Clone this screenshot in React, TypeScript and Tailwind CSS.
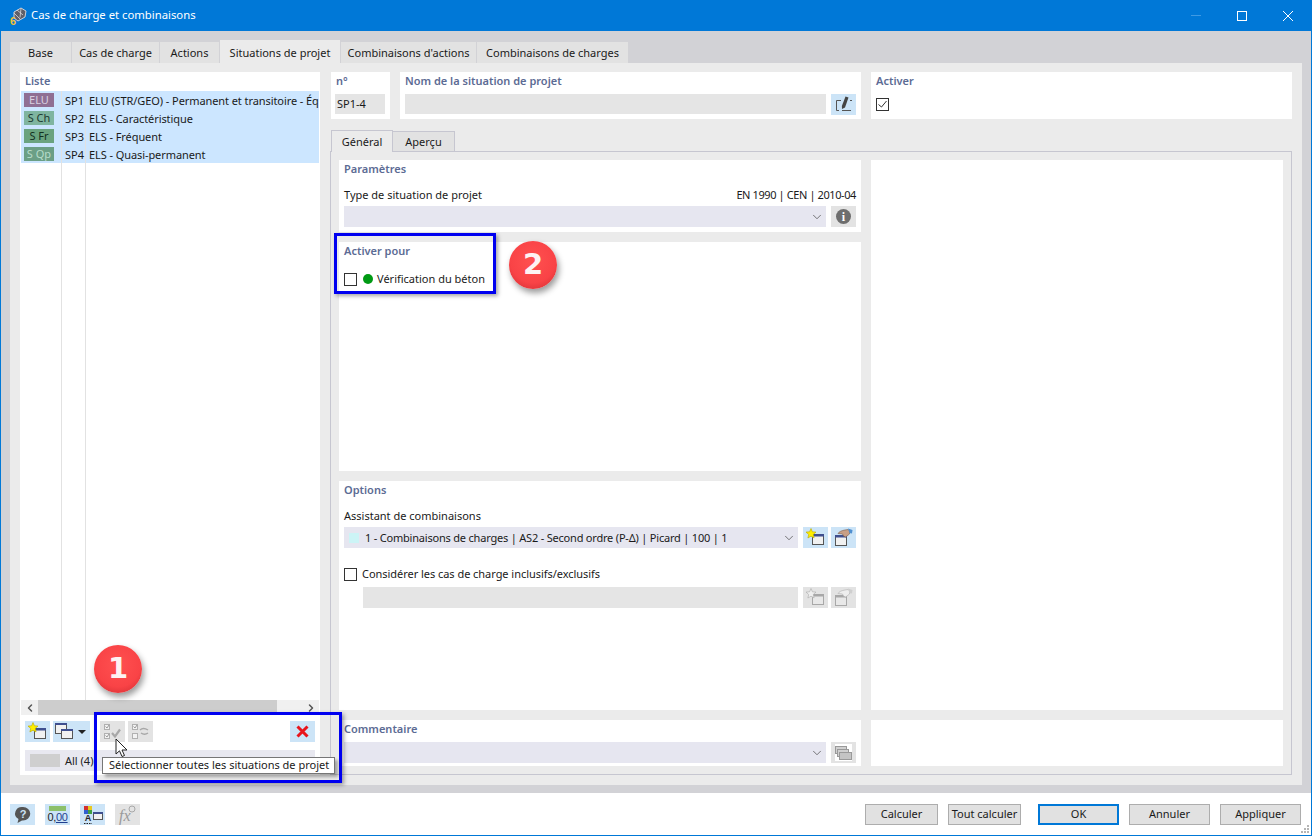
import type { ReactNode } from "react";
import { ChevronDown, ChevronLeft, ChevronRight } from "lucide-react";

const rows = [
  { tag: "ELU", tagCls: "bg-[#8f6f93] text-[#d9cfe0]", id: "SP1", name: "ELU (STR/GEO) - Permanent et transitoire - Éq" },
  { tag: "S Ch", tagCls: "bg-[#7fb5a0] text-[#1d3a30]", id: "SP2", name: "ELS - Caractéristique" },
  { tag: "S Fr", tagCls: "bg-[#6aa37f] text-[#12301f]", id: "SP3", name: "ELS - Fréquent" },
  { tag: "S Qp", tagCls: "bg-[#6b9f86] text-[#b7dccb]", id: "SP4", name: "ELS - Quasi-permanent" },
];

const mainTabs = [
  { label: "Base", w: "w-[61px]" },
  { label: "Cas de charge", w: "w-[87px]" },
  { label: "Actions", w: "w-[59px]" },
  { label: "Situations de projet", w: "w-[120px]", active: true },
  { label: "Combinaisons d'actions", w: "w-[135px]" },
  { label: "Combinaisons de charges", w: "w-[151px]" },
];

function WindowGlyph({ muted }: { muted?: boolean }) {
  const dark = muted ? "#a8a8a8" : "#555";
  const head = muted ? "#a8a8a8" : "#3f4f8f";
  return (
    <>
      <rect x="8.5" y="6.5" width="11" height="10" fill={muted ? "#e8e8e8" : "#f1f1f1"} stroke={dark} />
      <rect x="8" y="6" width="12" height="2.5" fill={head} />
    </>
  );
}

function NewIcon({ muted }: { muted?: boolean }) {
  return (
    <svg width="25" height="21" viewBox="0 0 25 21">
      <g transform="translate(1 1)">
        <WindowGlyph muted={muted} />
        <path
          d="M7 .5l1.400 3.300 3.600.3-2.700 2.300.8 3.500L7 8.200 3.900 10l.8-3.500L2 4.100l3.600-.3z"
          fill={muted ? "#efefef" : "#ffee00"}
          stroke={muted ? "#aaa" : "#b8a900"}
          strokeWidth=".6"
        />
      </g>
    </svg>
  );
}

function HandIcon({ muted }: { muted?: boolean }) {
  return (
    <svg width="25" height="21" viewBox="0 0 25 21">
      <g transform="translate(-4 2)">
        <WindowGlyph muted={muted} />
      </g>
      <path
        d="M7 6.500c1-2 4-3 7-3.500l3-.5 2 1.500-.5 3-2.500 2-1.500 1-2-1-1-2z"
        fill={muted ? "#eeeeee" : "#c89f86"}
        stroke={muted ? "#b0b0b0" : "#7a5a48"}
        strokeWidth=".6"
      />
      <path d="M17 1.500l4.500 1.500-.5 3.500-2.500-.5z" fill={muted ? "#cfcfcf" : "#4f8fd0"} />
    </svg>
  );
}

function EditIcon() {
  return (
    <svg width="25" height="21" viewBox="0 0 25 21" fill="none">
      <path d="M10 6.500H5.500v10H8M11 16.500h9" stroke="#555" />
      <path d="M14.500 2.500l3 1-3.500 10-3 1.500-.1-3z" fill="#444" />
      <path d="M19 6.500h2" stroke="#555" />
    </svg>
  );
}

function CopyIcon() {
  return (
    <svg width="25" height="21" viewBox="0 0 25 21" className="shrink-0">
      <rect x="2.500" y="2.500" width="11" height="10" fill="#f1f1f1" stroke="#555" />
      <rect x="2" y="2" width="12" height="2" fill="#3f4f8f" />
      <rect x="8.500" y="8.500" width="11" height="9" fill="#f1f1f1" stroke="#555" />
      <rect x="8" y="8" width="12" height="2" fill="#3f4f8f" />
    </svg>
  );
}

function CheckAllIcon() {
  return (
    <svg width="25" height="21" viewBox="0 0 25 21" fill="none">
      <rect x="4.500" y="3.500" width="5" height="5" stroke="#b0b0b0" fill="#f2f2f2" />
      <rect x="4.500" y="12.500" width="5" height="5" stroke="#b0b0b0" fill="#f2f2f2" />
      <path d="M5.500 5.500l1.500 1.500 2-3M5.500 14.500l1.500 1.500 2-3" stroke="#9a9a9a" />
      <path d="M12 12l3 3.500 5-7" stroke="#a8a8a8" strokeWidth="2.200" />
    </svg>
  );
}

function SwapIcon() {
  return (
    <svg width="25" height="21" viewBox="0 0 25 21" fill="none">
      <rect x="4.500" y="3.500" width="5" height="5" stroke="#b0b0b0" fill="#f2f2f2" />
      <rect x="4.500" y="12.500" width="5" height="5" stroke="#b0b0b0" fill="#f2f2f2" />
      <path d="M5.500 5.500l1.500 1.500 2-3" stroke="#9a9a9a" />
      <path d="M12 9c2-2 5-2 8 0M20 12c-2 1.500-5 1.500-7 0" stroke="#a8a8a8" strokeWidth="1.500" />
    </svg>
  );
}

function HelpIcon() {
  return (
    <svg width="25" height="21" viewBox="0 0 25 21">
      <path d="M13 3a7 6.500 0 0 1 0 13.500h-1L7.500 19l1-4A7 6.500 0 0 1 13 3z" fill="#555" />
      <text x="13" y="14" textAnchor="middle" fontSize="11" fontWeight="700" fill="#cde4f7" fontFamily="Liberation Sans, sans-serif">?</text>
    </svg>
  );
}

function UnitsIcon() {
  return (
    <div className="flex h-full w-full flex-col items-center pt-[2px]">
      <div className="h-[5px] w-[17px] bg-[#8cc06a]" />
      <span className="text-[11px] leading-[13px] tracking-[-0.3px] text-[#222] font-['Liberation_Sans',sans-serif]">
        0,<span className="text-[#1f3f8f] underline">00</span>
      </span>
    </div>
  );
}

function ColorIcon() {
  return (
    <svg width="25" height="21" viewBox="0 0 25 21">
      <rect x="4" y="2" width="4" height="4" fill="#d23030" />
      <rect x="8" y="2" width="4" height="4" fill="#e8c820" />
      <rect x="4" y="6" width="4" height="4" fill="#3060d0" />
      <rect x="8" y="6" width="4" height="4" fill="#40a040" />
      <text x="8" y="17" textAnchor="middle" fontSize="9" fontWeight="700" fill="#222" fontFamily="Liberation Sans, sans-serif">A</text>
      <path d="M4 19.500h8" stroke="#222" strokeDasharray="1.500 1" />
      <rect x="13.500" y="8.500" width="9" height="7" fill="#f1f1f1" stroke="#555" />
      <rect x="13" y="8" width="10" height="2" fill="#3f4f8f" />
    </svg>
  );
}

function FormulaIcon() {
  return (
    <svg width="25" height="21" viewBox="0 0 25 21">
      <text x="4" y="17" fontSize="16" fontStyle="italic" fill="#9a9a9a" fontFamily="Liberation Serif, serif">fx</text>
      <circle cx="17" cy="5" r="3" fill="none" stroke="#a8a8a8" />
    </svg>
  );
}

function StackIcon() {
  return (
    <svg width="25" height="21" viewBox="0 0 25 21">
      <rect x="4" y="2" width="17" height="17" fill="#ffffff" />
      <rect x="4.500" y="4.500" width="11" height="7" fill="#d0d0d0" stroke="#999" />
      <rect x="6.500" y="7.500" width="11" height="7" fill="#d0d0d0" stroke="#999" />
      <rect x="8.500" y="10.500" width="12" height="7" fill="#c4c4c4" stroke="#999" />
    </svg>
  );
}

function IconBtn({ children, muted, className = "" }: { children: ReactNode; muted?: boolean; className?: string }) {
  return (
    <div className={`flex h-[21px] w-[25px] shrink-0 items-center justify-center ${muted ? "bg-[#e3e3e3]" : "bg-[#cce4f7]"} ${className}`}>
      {children}
    </div>
  );
}

function Box({ checked }: { checked?: boolean }) {
  return (
    <div className="flex h-[13px] w-[13px] shrink-0 items-center justify-center border border-[#333] bg-white">
      {checked && (
        <svg width="11" height="11" viewBox="0 0 11 11" fill="none">
          <path d="M1.500 5.500l3 2.500 5-6" stroke="#333" />
        </svg>
      )}
    </div>
  );
}

function CardLabel({ children }: { children: ReactNode }) {
  return <div className="h-[18px] text-[11px] font-semibold leading-[18px] text-[#5c6b94]">{children}</div>;
}

function Select({ children, className = "" }: { children?: ReactNode; className?: string }) {
  return (
    <div className={`flex h-[21px] items-center bg-[#e6e6f0] pr-[2px] ${className}`}>
      <div className="flex min-w-0 flex-1 items-center">{children}</div>
      <ChevronDown size={14} strokeWidth={1.2} className="text-[#444]" />
    </div>
  );
}

function Badge({ n, className }: { n: string; className: string }) {
  return (
    <div
      className={`absolute flex h-[48px] w-[48px] items-center justify-center rounded-full bg-[radial-gradient(circle_at_50%_40%,#ff5050_0%,#f94346_60%,#d83236_88%,#f08084_100%)] text-[29px] font-bold text-[#fdf3f3] shadow-[2px_4px_6px_rgba(0,0,0,0.4)] font-['DejaVu_Sans',sans-serif] ${className}`}
    >
      {n}
    </div>
  );
}

export default function App() {
  return (
    <div className="relative flex h-[836px] w-[1312px] flex-col overflow-hidden border border-t-0 border-[#0078d7] bg-white text-[11px] text-[#1a1a1a] font-['Noto_Sans',sans-serif]">
      {/* title bar */}
      <div className="flex h-[31px] shrink-0 items-center bg-[#0078d7] pl-[8px] text-white">
        <svg width="18" height="20" viewBox="0 0 18 20" className="mr-[4px]">
          <path d="M5 6l7-4 5 3-1 6-7 4-4-3z" fill="#5f5f68" stroke="#dcdce0" strokeWidth=".9" />
          <path d="M8 4l6 5M5 7l6 6M12 2.500l-1 9" stroke="#dcdce0" strokeWidth=".8" />
          <text x="1" y="19" fontSize="11" fontWeight="700" fill="#f2c23a" fontFamily="Liberation Sans, sans-serif">6</text>
        </svg>
        <span className="text-[11.3px]">Cas de charge et combinaisons</span>
        <div className="ml-auto flex items-center">
          <div className="flex w-[46px] justify-center">
            <div className="h-px w-[10px] bg-[#3f9ae4]" />
          </div>
          <div className="flex w-[46px] justify-center">
            <div className="h-[10px] w-[10px] border border-white" />
          </div>
          <div className="flex w-[46px] justify-center">
            <svg width="10" height="10" viewBox="0 0 10 10" fill="none">
              <path d="M0 0l10 10M10 0L0 10" stroke="#fff" />
            </svg>
          </div>
        </div>
      </div>

      {/* dialog body */}
      <div className="flex min-h-0 flex-1 flex-col bg-[#d2d2d6] px-[9px] pb-[8px] pt-[9px]">
        <div className="flex h-[23px] shrink-0 items-end">
          {mainTabs.map((t) => (
            <div
              key={t.label}
              className={`mr-px flex items-center justify-center ${t.w} ${t.active ? "h-[23px] bg-[#ebebeb] pt-[3px]" : "h-[21px] bg-[#e2e2e2] pt-px"}`}
            >
              {t.label}
            </div>
          ))}
        </div>

        <div className="flex min-h-0 flex-1 gap-[10px] bg-[#ebebeb] pb-[10px] pl-[10px] pr-[10px] pt-[9px]">
          {/* list column */}
          <div className="flex w-[300px] shrink-0 flex-col bg-white">
            <div className="h-[19px] pl-[5px] text-[11px] font-semibold leading-[18px] text-[#5c6b94]">Liste</div>
            <div className="flex min-h-0 flex-1 px-px">
              <div className="w-[41px] shrink-0 border-r border-[#e2e2e2]">
                {rows.map((r) => (
                  <div key={r.id} className="flex h-[18px] items-center bg-[#cce6ff] pl-[3px]">
                    <div className={`flex h-[14px] w-[30px] items-center justify-center text-[11px] ${r.tagCls}`}>{r.tag}</div>
                  </div>
                ))}
              </div>
              <div className="w-[24px] shrink-0 border-r border-[#e2e2e2]">
                {rows.map((r) => (
                  <div key={r.id} className="flex h-[18px] items-center justify-center bg-[#cce6ff] pl-[2px] pt-[2px]">
                    {r.id}
                  </div>
                ))}
              </div>
              <div className="min-w-0 flex-1 overflow-hidden">
                {rows.map((r) => (
                  <div key={r.id} className="flex h-[18px] items-center whitespace-nowrap bg-[#cce6ff] pl-[3px] pt-[2px] tracking-[-0.08px]">
                    {r.name}
                  </div>
                ))}
              </div>
            </div>
            <div className="mx-px flex h-[15px] shrink-0 items-center bg-[#f0f0f0]">
              <div className="flex w-[17px] justify-center">
                <ChevronLeft size={12} strokeWidth={3} className="text-[#555]" />
              </div>
              <div className="h-full w-[239px] bg-[#cdcdcd]" />
              <div className="ml-auto flex w-[17px] justify-center">
                <ChevronRight size={12} strokeWidth={3} className="text-[#555]" />
              </div>
            </div>
            <div className="mt-[6px] flex h-[21px] shrink-0 pl-[5px] pr-[5px]">
              <IconBtn>
                <NewIcon />
              </IconBtn>
              <div className="ml-[3px] flex h-[21px] w-[37px] items-center bg-[#cce4f7]">
                <CopyIcon />
                <div className="h-0 w-0 border-x-[4px] border-t-[4px] border-x-transparent border-t-[#222]" />
              </div>
              <IconBtn muted className="ml-[10px]">
                <CheckAllIcon />
              </IconBtn>
              <IconBtn muted className="ml-[3px]">
                <SwapIcon />
              </IconBtn>
              <IconBtn className="ml-auto">
                <svg width="13" height="13" viewBox="0 0 13 13" fill="none">
                  <path d="M1.500 1.500l10 10M11.500 1.500l-10 10" stroke="#e8141c" strokeWidth="3" />
                </svg>
              </IconBtn>
            </div>
            <div className="mx-[5px] mb-[4px] mt-[8px] flex h-[21px] shrink-0 items-center bg-[#e8e8f0] pl-[5px]">
              <div className="h-[13px] w-[30px] bg-[#cfcfcf]" />
              <span className="ml-[5px] pt-[2px] text-[#222]">All (4)</span>
            </div>
          </div>

          {/* detail column */}
          <div className="flex min-w-0 flex-1 flex-col">
            <div className="flex h-[47px] shrink-0 gap-[10px] pl-px">
              <div className="w-[59px] bg-white pl-[4px] pr-[5px]">
                <div className="h-[22px] pl-px text-[11px] font-semibold leading-[18px] text-[#5c6b94]">n°</div>
                <div className="flex h-[20px] items-center bg-[#e5e5e5] pl-[2px]">SP1-4</div>
              </div>
              <div className="w-[461px] bg-white px-[5px]">
                <div className="h-[22px] text-[11px] font-semibold leading-[18px] text-[#5c6b94]">Nom de la situation de projet</div>
                <div className="flex gap-[5px]">
                  <div className="h-[20px] flex-1 bg-[#e5e5e5]" />
                  <IconBtn>
                    <EditIcon />
                  </IconBtn>
                </div>
              </div>
              <div className="flex-1 bg-white px-[5px]">
                <div className="h-[26px] text-[11px] font-semibold leading-[18px] text-[#5c6b94]">Activer</div>
                <Box checked />
              </div>
            </div>

            <div className="mt-[11px] flex h-[21px] shrink-0 items-end pl-px">
              <div className="z-10 -mb-px flex h-[22px] w-[62px] items-center justify-center border border-b-0 border-[#c6c6d0] bg-[#ebebeb] pt-[2px]">
                Général
              </div>
              <div className="flex h-[20px] w-[62px] items-center justify-center border border-b-0 border-l-0 border-[#c6c6d0] bg-[#e2e2e2] pt-px">
                Aperçu
              </div>
            </div>

            <div className="flex min-h-0 flex-1 gap-[10px] border border-[#c6c6d0] px-[8px] pb-[8px] pt-[8px]">
              <div className="flex w-[522px] shrink-0 flex-col gap-[10px]">
                <div className="h-[72px] shrink-0 bg-white px-[5px]">
                  <CardLabel>Paramètres</CardLabel>
                  <div className="mt-[8px] flex h-[18px] items-center justify-between">
                    <span>Type de situation de projet</span>
                    <span className="tracking-[-0.4px]">EN 1990 | CEN | 2010-04</span>
                  </div>
                  <div className="mt-[2px] flex gap-[5px]">
                    <Select className="flex-1" />
                    <IconBtn muted>
                      <div className="flex h-[15px] w-[15px] items-center justify-center rounded-full bg-[#6e6e6e] text-[12px] font-bold leading-none text-white font-['Liberation_Serif',serif]">
                        i
                      </div>
                    </IconBtn>
                  </div>
                </div>

                <div className="h-[229px] shrink-0 bg-white px-[5px]">
                  <CardLabel>Activer pour</CardLabel>
                  <div className="mt-[12px] flex h-[14px] items-center">
                    <Box />
                    <div className="ml-[6px] h-[10px] w-[10px] rounded-full bg-[#009a14]" />
                    <span className="ml-[4px]">Vérification du béton</span>
                  </div>
                </div>

                <div className="h-[229px] shrink-0 bg-white px-[5px]">
                  <CardLabel>Options</CardLabel>
                  <div className="mt-[8px] flex h-[18px] items-center">Assistant de combinaisons</div>
                  <div className="mt-[2px] flex gap-[5px]">
                    <Select className="flex-1">
                      <div className="ml-[5px] h-[10px] w-[10px] bg-[#ccf4f6]" />
                      <span className="ml-[6px] whitespace-nowrap pt-[2px] tracking-[-0.2px]">1 - Combinaisons de charges | AS2 - Second ordre (P-Δ) | Picard | 100 | 1</span>
                    </Select>
                    <IconBtn>
                      <NewIcon />
                    </IconBtn>
                    <IconBtn className="-ml-[2px]">
                      <HandIcon />
                    </IconBtn>
                  </div>
                  <div className="mt-[19px] flex h-[14px] items-center">
                    <Box />
                    <span className="ml-[5px] tracking-[-0.04px]">Considérer les cas de charge inclusifs/exclusifs</span>
                  </div>
                  <div className="ml-[19px] mt-[6px] flex gap-[5px]">
                    <div className="h-[21px] flex-1 bg-[#e5e5e5]" />
                    <IconBtn muted>
                      <NewIcon muted />
                    </IconBtn>
                    <IconBtn muted className="-ml-[2px]">
                      <HandIcon muted />
                    </IconBtn>
                  </div>
                </div>

                <div className="min-h-0 flex-1 bg-white px-[5px]">
                  <CardLabel>Commentaire</CardLabel>
                  <div className="mt-[4px] flex gap-[5px]">
                    <Select className="flex-1" />
                    <IconBtn muted>
                      <StackIcon />
                    </IconBtn>
                  </div>
                </div>
              </div>

              <div className="flex min-w-0 flex-1 flex-col gap-[10px]">
                <div className="min-h-0 flex-1 bg-white" />
                <div className="h-[46px] shrink-0 bg-white" />
              </div>
            </div>
          </div>
        </div>
      </div>

      {/* footer */}
      <div className="flex h-[42px] shrink-0 items-center pl-[9px] pr-[10px]">
        <div className="flex gap-[10px]">
          <IconBtn>
            <HelpIcon />
          </IconBtn>
          <IconBtn>
            <UnitsIcon />
          </IconBtn>
          <IconBtn>
            <ColorIcon />
          </IconBtn>
          <IconBtn muted>
            <FormulaIcon />
          </IconBtn>
        </div>
        <div className="ml-auto flex text-[11px]">
          <div className="flex h-[21px] w-[73px] items-center justify-center border border-[#adadad] bg-[#e1e1e1] pt-px">Calculer</div>
          <div className="ml-[10px] flex h-[21px] w-[73px] items-center justify-center whitespace-nowrap border border-[#adadad] bg-[#e1e1e1] pt-px">Tout calculer</div>
          <div className="ml-[17px] flex h-[21px] w-[81px] items-center justify-center border-2 border-[#0078d7] bg-[#e1e1e1] pt-px">OK</div>
          <div className="ml-[10px] flex h-[21px] w-[81px] items-center justify-center border border-[#adadad] bg-[#e1e1e1] pt-px">Annuler</div>
          <div className="ml-[10px] flex h-[21px] w-[81px] items-center justify-center border border-[#adadad] bg-[#e1e1e1] pt-px">Appliquer</div>
        </div>
      </div>
      <svg width="10" height="10" viewBox="0 0 10 10" className="absolute bottom-px right-px" fill="#b5b5b5">
        <rect x="7" y="1" width="2" height="2" />
        <rect x="4" y="4" width="2" height="2" />
        <rect x="7" y="4" width="2" height="2" />
        <rect x="1" y="7" width="2" height="2" />
        <rect x="4" y="7" width="2" height="2" />
        <rect x="7" y="7" width="2" height="2" />
      </svg>

      {/* annotations on top of the dialog */}
      <div className="absolute left-[333px] top-[233px] h-[61px] w-[162px] border-[3px] border-[#0000f0] shadow-[2px_2px_4px_rgba(0,0,0,0.35)]" />
      <div className="absolute left-[93px] top-[712px] h-[71px] w-[248px] border-[3px] border-[#0000f0] shadow-[2px_2px_4px_rgba(0,0,0,0.35)]" />
      <Badge n="1" className="left-[93px] top-[645px]" />
      <Badge n="2" className="left-[508px] top-[241px]" />
      <div className="absolute left-[101px] top-[757px] flex h-[17px] w-[233px] items-center whitespace-nowrap border border-[#767676] bg-white pl-[6px] text-[11px] shadow-[3px_3px_3px_rgba(0,0,0,0.3)]">
        Sélectionner toutes les situations de projet
      </div>
      <svg width="14" height="20" viewBox="0 0 14 20" className="absolute left-[114px] top-[738px]">
        <path d="M1 1v15l3.500-3.200 2.500 5.700 2.500-1-2.500-5.500h5z" fill="#fff" stroke="#222" />
      </svg>
    </div>
  );
}
